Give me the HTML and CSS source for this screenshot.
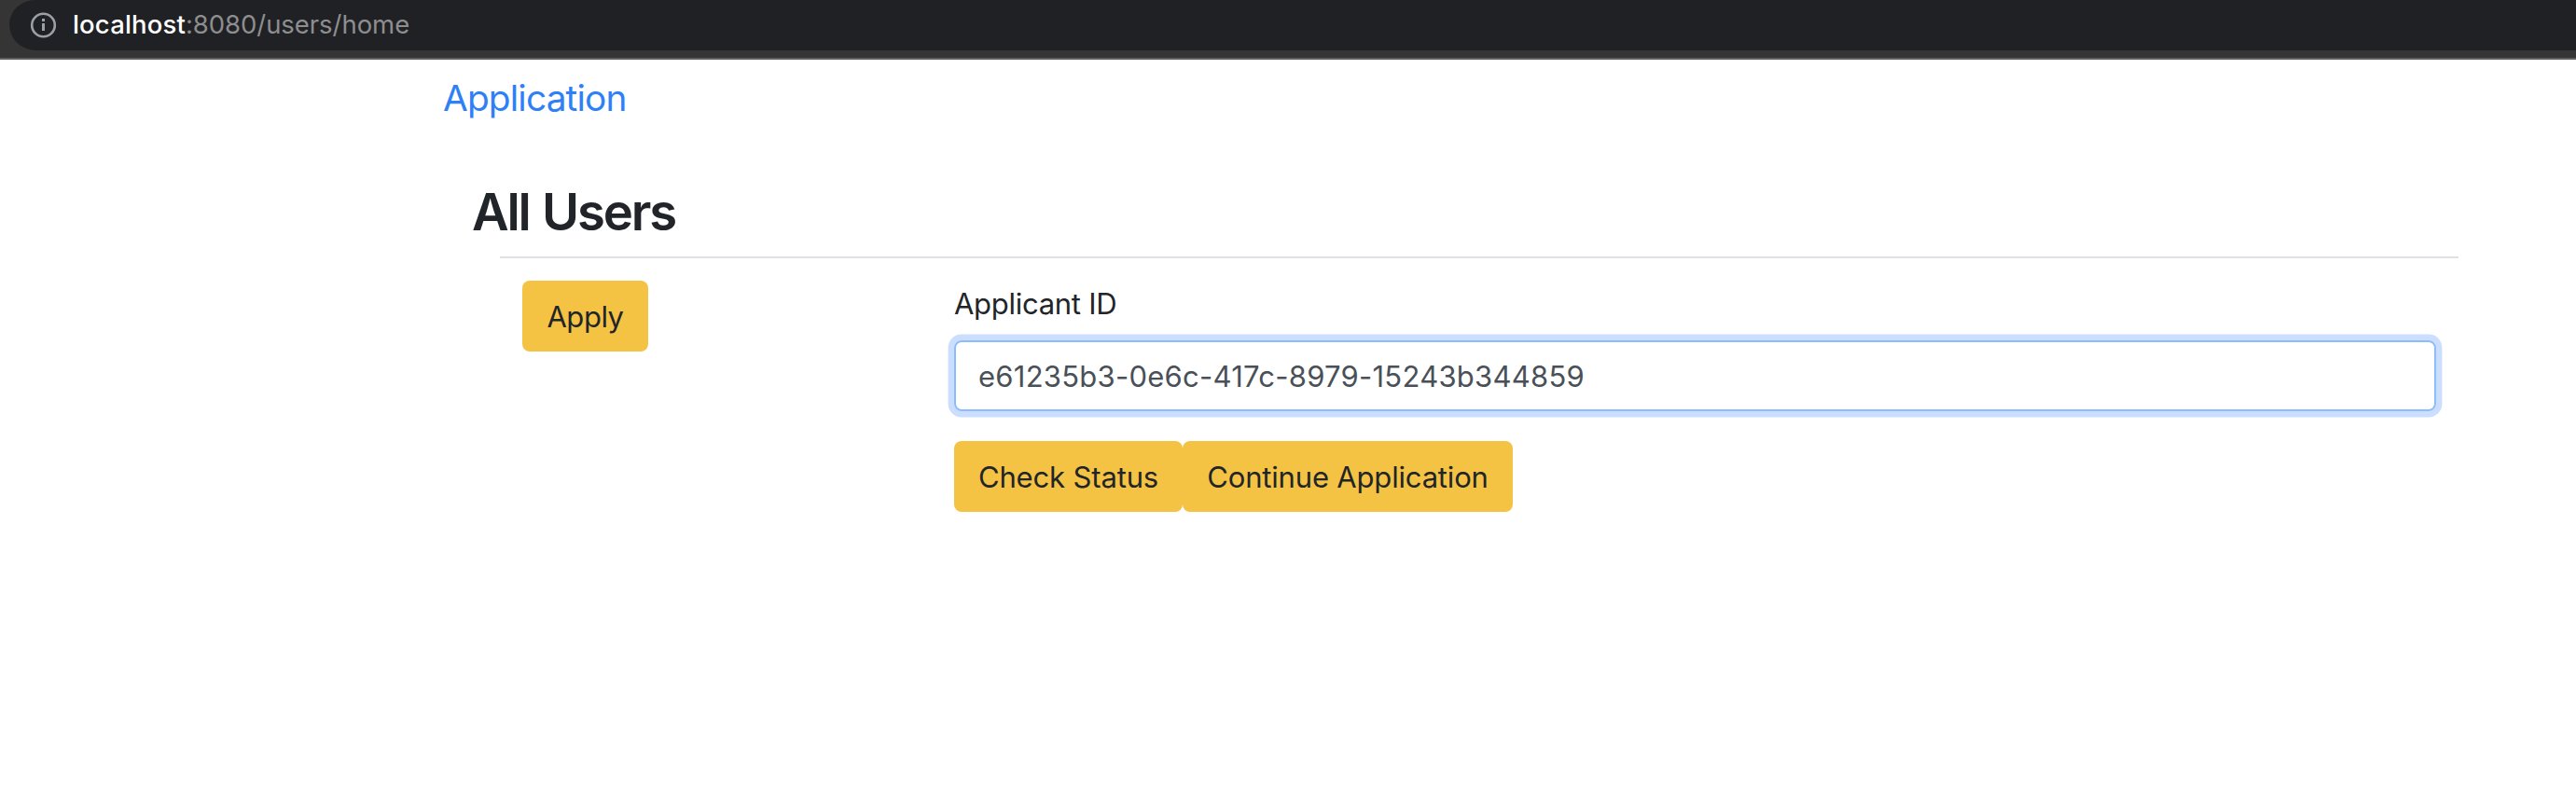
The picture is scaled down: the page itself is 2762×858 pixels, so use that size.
FILE: index.html
```html
<!DOCTYPE html>
<html lang="en">
<head>
<meta charset="utf-8">
<title>All Users</title>
<link rel="stylesheet" href="styles.css">
</head>
<body>
<header class="toolbar">
  <div class="address">
    <svg class="info" viewBox="0 0 28 28" aria-hidden="true">
      <circle cx="14" cy="14" r="12.3" fill="none" stroke="#9aa0a6" stroke-width="2.6"/>
      <path d="M12.5 7h3v3h-3zM12.5 12h3v8h-3z" fill="#9aa0a6"/>
    </svg>
    <div class="url"><span class="host">localhost</span><span class="path">:8080/users/home</span></div>
  </div>
</header>
<nav class="navbar"><a class="brand" href="#">Application</a></nav>
<main class="content">
  <h2 class="title">All Users</h2>
  <div class="row">
    <div class="cell-apply"><button class="btn btn-apply">Apply</button></div>
    <form class="cell-form">
      <label class="label" for="applicant">Applicant ID</label>
      <div class="input" id="applicant">e61235b3-0e6c-417c-8979-15243b344859</div>
      <div class="actions">
        <button type="button" class="btn btn-check">Check Status</button>
        <button type="button" class="btn btn-continue">Continue Application</button>
      </div>
    </form>
  </div>
</main>
</body>
</html>
```
FILE: styles.css
```css
* { box-sizing: border-box; }
body {
  margin: 0;
  min-height: 858px;
  background: #fff;
  color: #212529;
  font: 430 31px/48px Inter, "Liberation Sans", sans-serif;
}
.toolbar {
  height: 64px;
  padding-left: 10px;
  background: #353535;
  border-bottom: 2px solid #5f5f5f;
}
.address {
  display: flex;
  align-items: center;
  height: 54px;
  padding-left: 22px;
  background: #202124;
  border-radius: 28px 0 0 28px / 26px 0 0 28px;
}
.info { width: 29px; height: 28px; flex: none; }
.url {
  margin-left: 17px;
  font-size: 27.5px;
  line-height: 52px;
  height: 54px;
  white-space: nowrap;
}
.host { color: #fff; font-weight: 460; letter-spacing: 0.15px; }
.path { color: #8e8e8f; letter-spacing: -0.05px; }
.navbar { padding: 11px 0 0 475px; height: 128px; }
.brand { color: #2f80f7; font-size: 38.8px; line-height: 60px; letter-spacing: -0.83px; text-decoration: none; }
.content { padding-left: 507px; }
.title {
  height: 67px;
  margin: 0 0 16px -1px;
  padding-top: 1px;
  font-size: 54.5px;
  font-weight: 560;
  line-height: 68px;
  letter-spacing: -2.2px;
  word-spacing: 2px;
}
.row {
  display: flex;
  margin-left: 29px;
  width: 2100px;
  padding: 24px;
  border-top: 2px solid #dee2e6;
}
.cell-apply { width: 463px; }
.cell-form { flex: 1; }
.label {
  display: block;
  height: 48px;
  margin-bottom: 16px;
  line-height: 50px;
  letter-spacing: -0.28px;
  white-space: nowrap;
}
.input {
  height: 76px;
  padding: 12px 24px;
  border: 2px solid #8bbdfb;
  border-radius: 8px;
  color: #495057;
  line-height: 50px;
  letter-spacing: 0.25px;
  box-shadow: 0 0 0 6.4px #cbdeff;
}
.actions { display: flex; margin-top: 32px; }
.btn {
  height: 76px;
  padding: 15px 0 13px;
  border: 0;
  border-radius: 8px;
  background: #f5c344;
  color: #212529;
  font: inherit;
  white-space: nowrap;
}
.btn-apply { display: block; width: 135px; letter-spacing: -0.45px; }
.btn-check { width: 245px; letter-spacing: -0.15px; }
.btn-continue { width: 354px; letter-spacing: -0.18px; }
```
